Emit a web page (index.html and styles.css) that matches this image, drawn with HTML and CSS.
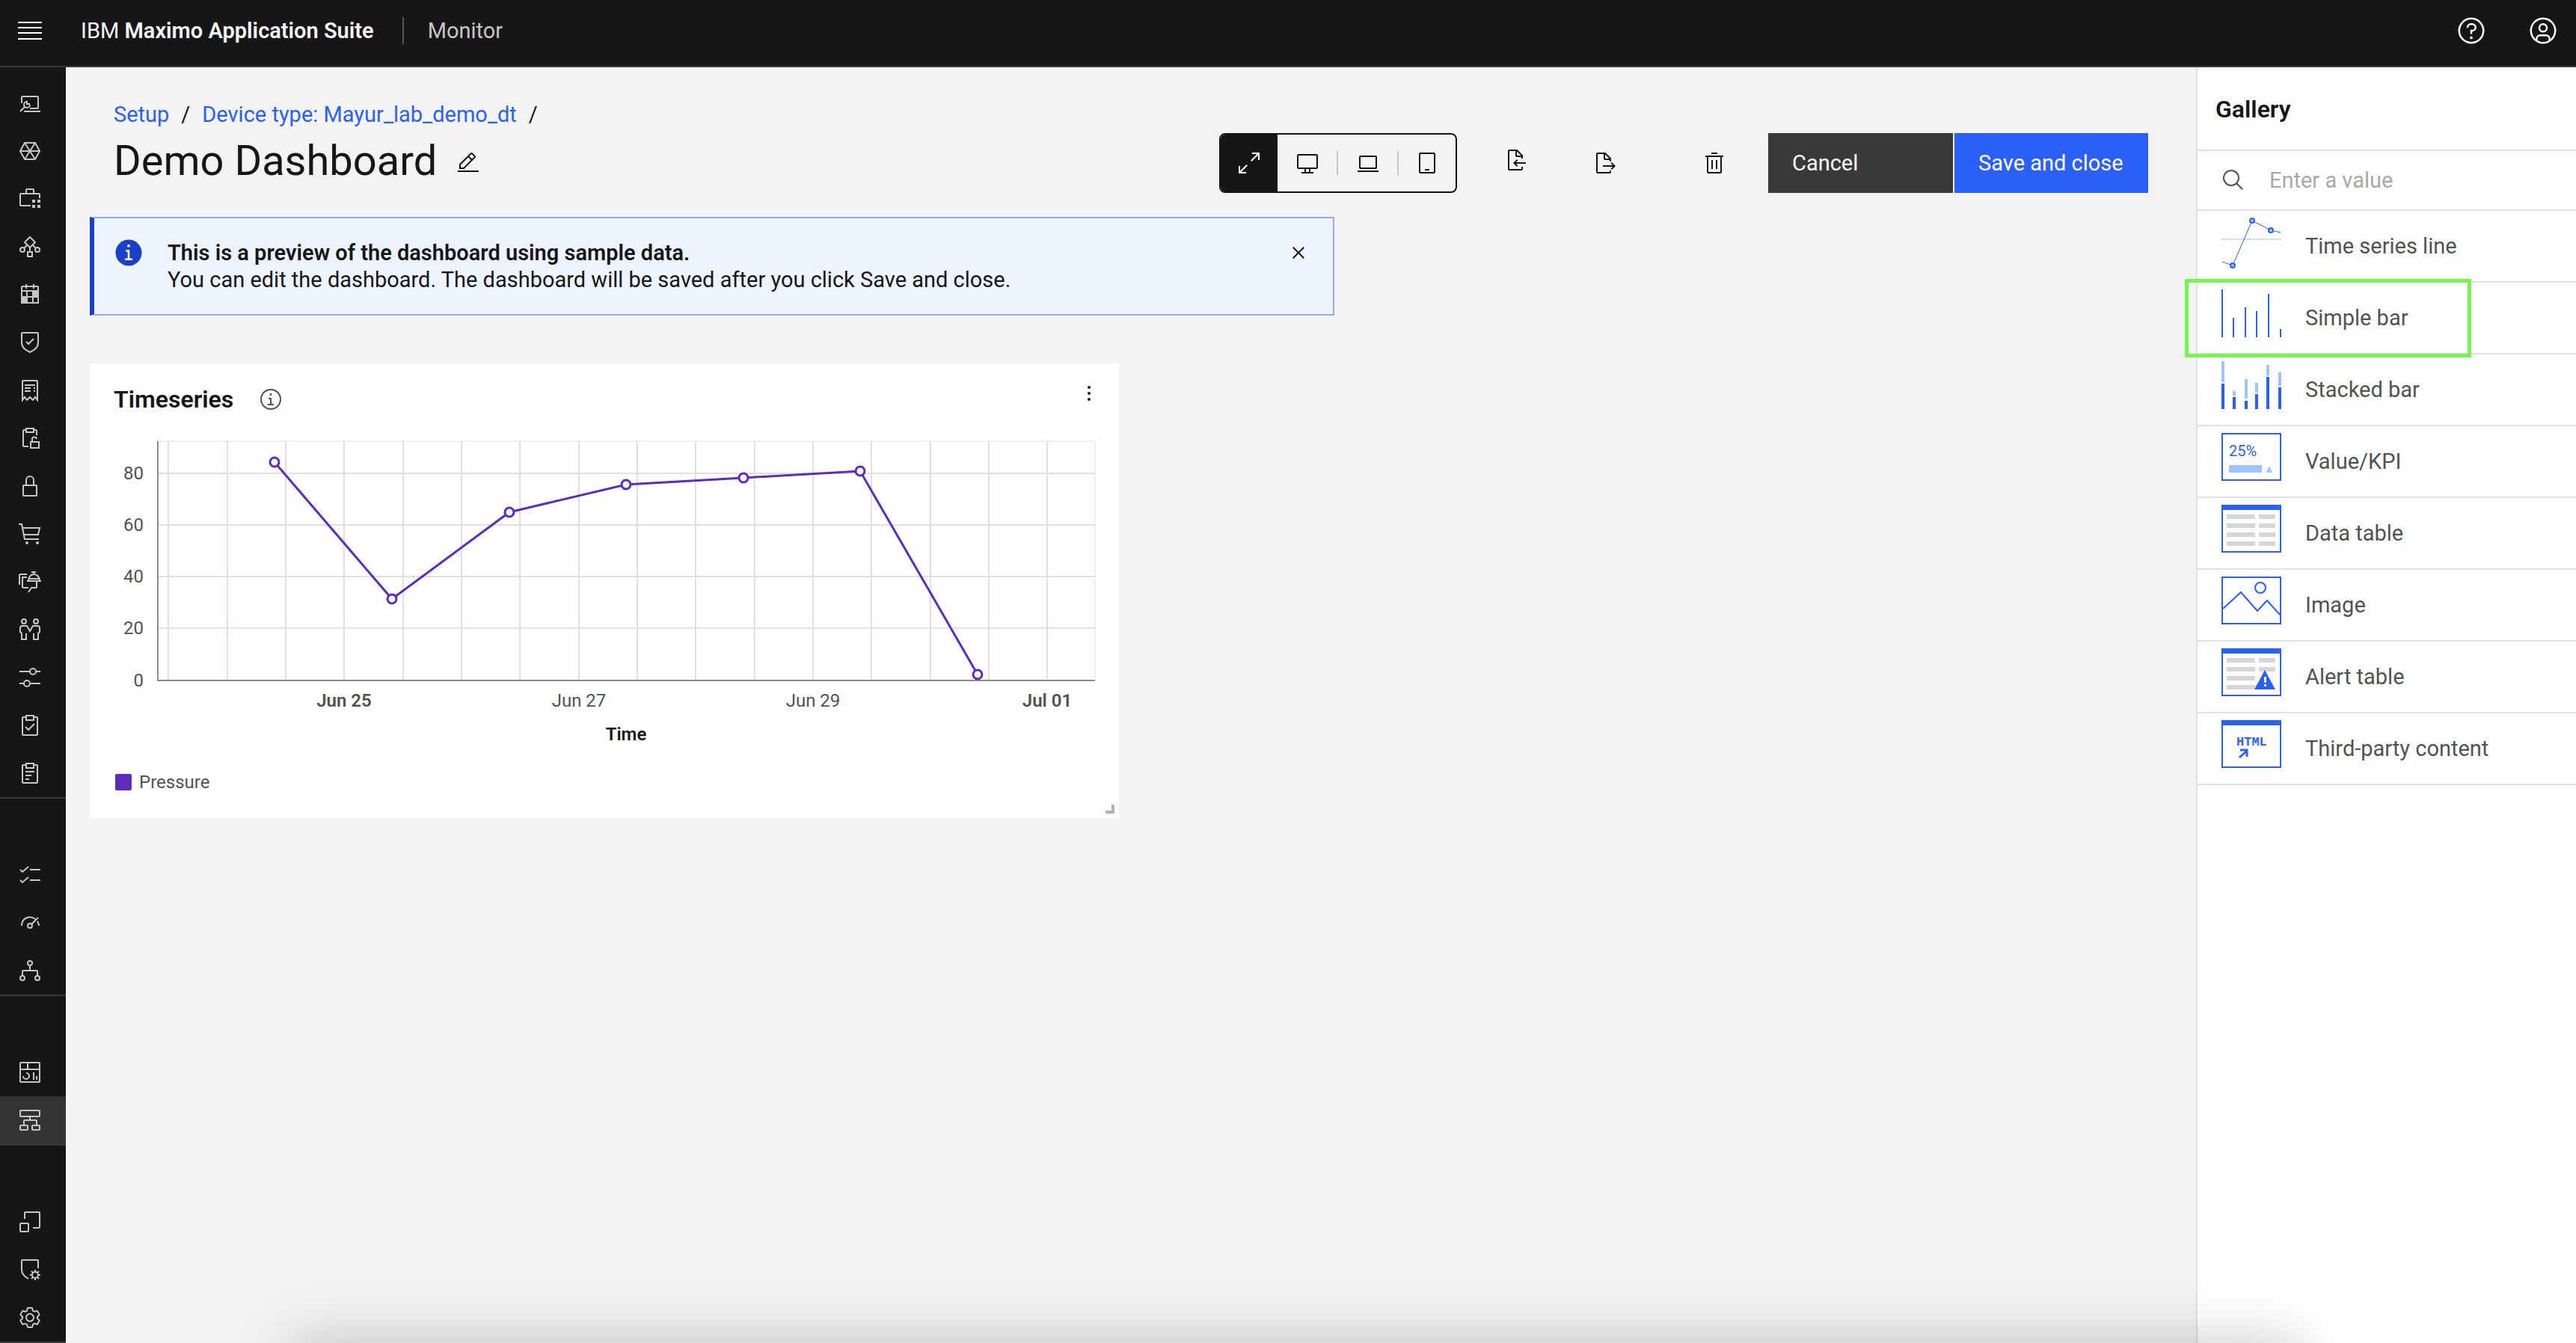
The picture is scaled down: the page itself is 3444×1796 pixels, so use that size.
FILE: index.html
```html
<!DOCTYPE html>
<html lang="en">
<head>
<meta charset="utf-8">
<meta name="viewport" content="width=device-width, initial-scale=1">
<title>Demo Dashboard - Monitor</title>
<link rel="stylesheet" href="styles.css">
</head>
<body>
<div class="shell">
  <header class="topbar">
    <button class="menu-button" type="button" aria-label="Open menu">
      <svg class="menu-icon" viewBox="0 0 32 24" aria-hidden="true"><path d="M0 1h32M0 8h32M0 15h32M0 23h32"/></svg>
    </button>
    <a class="brand" href="#">IBM <strong>Maximo Application Suite</strong></a>
    <span class="app-name">Monitor</span>
    <div class="topbar-actions">
      <button class="topbar-button" type="button" aria-label="Help">
        <svg class="icon-lg solid" viewBox="0 0 32 32" aria-hidden="true"><path d="M16 2a14 14 0 1 0 14 14A14 14 0 0 0 16 2Zm0 26a12 12 0 1 1 12-12 12 12 0 0 1-12 12Z"/><circle cx="16" cy="23.5" r="1.5"/><path d="M17 8h-1.500A4.490 4.490 0 0 0 11 12.500V13h2v-.5A2.500 2.500 0 0 1 15.500 10H17a2.500 2.500 0 0 1 0 5h-2v4.500h2V17a4.500 4.500 0 0 0 0-9Z"/></svg>
      </button>
      <button class="topbar-button" type="button" aria-label="Account">
        <svg class="icon-lg solid" viewBox="0 0 32 32" aria-hidden="true"><path d="M16 8a5 5 0 1 0 5 5 5 5 0 0 0-5-5Zm0 8a3 3 0 1 1 3-3 3 3 0 0 1-3 3Z"/><path d="M16 2a14 14 0 1 0 14 14A14.016 14.016 0 0 0 16 2Zm-6 24.377V25a3.003 3.003 0 0 1 3-3h6a3.003 3.003 0 0 1 3 3v1.377a11.899 11.899 0 0 1-12 0Zm13.993-1.451A5.002 5.002 0 0 0 19 20h-6a5.002 5.002 0 0 0-4.993 4.926 12 12 0 1 1 15.985 0Z"/></svg>
      </button>
    </div>
  </header>

  <nav class="rail" aria-label="Applications">
    <ul class="rail-group rail-group-first">
      <li><a href="#" aria-label="Work centre"><svg class="icon line" viewBox="0 0 32 32"><path d="M5 16V8a1 1 0 0 1 1-1h20a1 1 0 0 1 1 1v14a1 1 0 0 1-1 1H16M8 27h22M3 27l6-6M12 14a4 4 0 1 0 4 4M12 13v4h4"/></svg></a></li>
      <li><a href="#" aria-label="Assets"><svg class="icon line" viewBox="0 0 32 32"><path d="M3 16 9 5h14l6 11-6 11H9zM3 16h26M9 5l14 22M23 5 9 27"/></svg></a></li>
      <li><a href="#" aria-label="Inventory"><svg class="icon line" viewBox="0 0 32 32"><path d="M17 25H4a1 1 0 0 1-1-1V10a1 1 0 0 1 1-1h24a1 1 0 0 1 1 1v5M11 9V4a1 1 0 0 1 1-1h8a1 1 0 0 1 1 1v5"/><path class="dot" d="M19 17h4v4h-4zM26 17h4v4h-4zM19 24h4v4h-4zM26 24h4v4h-4z"/></svg></a></li>
      <li><a href="#" aria-label="Planning"><svg class="icon line" viewBox="0 0 32 32"><path d="M16 3l7 7-7 7-7-7zM12 14l-4 4M20 14l4 4M16 17v6M13 23h6v6h-6z"/><circle cx="6" cy="20" r="3"/><circle cx="26" cy="20" r="3"/></svg></a></li>
      <li><a href="#" aria-label="Scheduling"><svg class="icon line" viewBox="0 0 32 32"><rect x="5" y="5" width="22" height="22" rx="1"/><path d="M11 2v6M21 2v6"/><path class="dot" fill-rule="evenodd" d="M4 10h24v18H4zM6 12v6h5v-6zM13 12v6h6v-6zM13 20v6h6v-6zM21 20v6h5v-6z"/></svg></a></li>
      <li><a href="#" aria-label="Safety"><svg class="icon line" viewBox="0 0 32 32"><path d="M5 4a1 1 0 0 1 1-1h20a1 1 0 0 1 1 1v12c0 7-5 10-11 13C10 26 5 23 5 16zM11 15l3 3 7-7"/></svg></a></li>
      <li><a href="#" aria-label="Invoices"><svg class="icon line" viewBox="0 0 32 32"><path d="M6 29V4a1 1 0 0 1 1-1h18a1 1 0 0 1 1 1v25l-3-4-3 4-4-4-4 4-3-4zM9 9h14M9 13h8M9 17h8M21 13h2M21 17h2"/></svg></a></li>
      <li><a href="#" aria-label="Open contracts"><svg class="icon line" viewBox="0 0 32 32"><path d="M14 27H8a1 1 0 0 1-1-1V6a1 1 0 0 1 1-1h3M21 5h3a1 1 0 0 1 1 1v6M11 3h10v5H11zM17 21h11v8H17zM19 21v-3a3 3 0 0 1 6-1"/></svg></a></li>
      <li><a href="#" aria-label="Permits"><svg class="icon line" viewBox="0 0 32 32"><rect x="7" y="15" width="18" height="14" rx="1"/><path d="M11 15V8a5 5 0 0 1 10 0v7"/></svg></a></li>
      <li><a href="#" aria-label="Purchasing"><svg class="icon line" viewBox="0 0 32 32"><path d="M1 3h4l4 20h19M6 8h23l-2 9H8"/><circle class="dot" cx="12" cy="28" r="2"/><circle class="dot" cx="26" cy="28" r="2"/></svg></a></li>
      <li><a href="#" aria-label="Service desk"><svg class="icon line" viewBox="0 0 32 32"><path d="M2 20V7a1 1 0 0 1 1-1h9M12 10H6v13a1 1 0 0 0 1 1h7M14 30l4-6h6a1 1 0 0 0 1-1v-7M12 15h19M14 12h15M14 15c0-12 15-12 15 0M18 3h6M21 3v3"/></svg></a></li>
      <li><a href="#" aria-label="Service level"><svg class="icon line" viewBox="0 0 32 32"><circle cx="8" cy="5" r="3"/><circle cx="24" cy="5" r="3"/><path d="M11 21v8H5v-8l-2-2v-5a3 3 0 0 1 3-3h6l4 7 4-7h6a3 3 0 0 1 3 3v5l-2 2v8h-6v-8"/></svg></a></li>
      <li><a href="#" aria-label="Adjustments"><svg class="icon line" viewBox="0 0 32 32"><path d="M2 8h14M24 8h6M2 24h6M16 24h14"/><circle cx="20" cy="8" r="4"/><circle cx="12" cy="24" r="4"/></svg></a></li>
      <li><a href="#" aria-label="Work orders"><svg class="icon line" viewBox="0 0 32 32"><path d="M11 5H7a1 1 0 0 0-1 1v22a1 1 0 0 0 1 1h18a1 1 0 0 0 1-1V6a1 1 0 0 0-1-1h-4M11 3h10v6H11zM10 18l4 4 8-8"/></svg></a></li>
      <li><a href="#" aria-label="Reports"><svg class="icon line" viewBox="0 0 32 32"><path d="M11 5H7a1 1 0 0 0-1 1v22a1 1 0 0 0 1 1h18a1 1 0 0 0 1-1V6a1 1 0 0 0-1-1h-4M11 3h10v6H11zM10 14h12M10 19h8M10 24h5"/></svg></a></li>
    </ul>
    <ul class="rail-group">
      <li><a href="#" aria-label="Tasks"><svg class="icon line" viewBox="0 0 32 32"><path d="M3 9l3 3 8-7M16 9h14M3 23l3 3 8-7M16 23h14"/></svg></a></li>
      <li><a href="#" aria-label="Health"><svg class="icon line" viewBox="0 0 32 32"><circle cx="16" cy="20" r="3"/><path d="M18 18l9-9M5 20c0-11 11-14 18-9M26 14c1 2 2 4 2 6"/></svg></a></li>
      <li><a href="#" aria-label="Hierarchy"><svg class="icon line" viewBox="0 0 32 32"><circle cx="16" cy="6" r="3"/><circle cx="6" cy="26" r="3"/><circle cx="26" cy="26" r="3"/><path d="M16 9v7M6 23v-6a1 1 0 0 1 1-1h18a1 1 0 0 1 1 1v6"/></svg></a></li>
    </ul>
    <ul class="rail-group">
      <li><a href="#" aria-label="Dashboards"><svg class="icon line" viewBox="0 0 32 32"><rect x="3" y="3" width="26" height="26" rx="1"/><path d="M3 12h26M13 3v9M11 17a4 4 0 1 1-4 4M21 16v10M25 21v5"/></svg></a></li>
      <li><a class="current" href="#" aria-label="Setup" aria-current="page"><svg class="icon line" viewBox="0 0 32 32"><rect x="3" y="3" width="26" height="8" rx="1"/><rect x="3" y="23" width="10" height="6" rx="1"/><rect x="19" y="23" width="10" height="6" rx="1"/><path d="M16 11v5M8 23v-6a1 1 0 0 1 1-1h15a1 1 0 0 1 1 1v6"/></svg></a></li>
    </ul>
    <ul class="rail-group">
      <li><a href="#" aria-label="Edge"><svg class="icon line" viewBox="0 0 32 32"><path d="M9 12V4a1 1 0 0 1 1-1h18a1 1 0 0 1 1 1v19a1 1 0 0 1-1 1h-8"/><rect x="3" y="18" width="11" height="11" rx="1"/></svg></a></li>
      <li><a href="#" aria-label="Security"><svg class="icon line" viewBox="0 0 32 32"><path d="M14 28c-6-3-9-6-9-12V4a1 1 0 0 1 1-1h20a1 1 0 0 1 1 1v10"/><circle cx="23" cy="23" r="4"/><path d="M23 16v3M23 27v3M16 23h3M27 23h3M18 18l2 2M26 26l2 2M28 18l-2 2M20 26l-2 2"/></svg></a></li>
      <li><a href="#" aria-label="Settings"><svg class="icon" viewBox="0 0 32 32"><path d="M27,16.76c0-.25,0-.5,0-.76s0-.51,0-.77l1.92-1.68A2,2,0,0,0,29.3,11L26.94,7a2,2,0,0,0-1.73-1,2,2,0,0,0-.64.1l-2.43.82a11.35,11.35,0,0,0-1.31-.75l-.51-2.52a2,2,0,0,0-2-1.61H13.64a2,2,0,0,0-2,1.61l-.51,2.52a11.48,11.48,0,0,0-1.32.75L7.43,6.06A2,2,0,0,0,6.79,6,2,2,0,0,0,5.06,7L2.7,11a2,2,0,0,0,.41,2.51L5,15.24c0,.25,0,.5,0,.76s0,.51,0,.77L3.11,18.45A2,2,0,0,0,2.7,21L5.06,25a2,2,0,0,0,1.73,1,2,2,0,0,0,.64-.1l2.43-.82a11.35,11.35,0,0,0,1.31.75l.51,2.52a2,2,0,0,0,2,1.61h4.72a2,2,0,0,0,2-1.61l.51-2.52a11.48,11.48,0,0,0,1.32-.75l2.42.82a2,2,0,0,0,.64.1,2,2,0,0,0,1.73-1L29.3,21a2,2,0,0,0-.41-2.51ZM25.21,24l-3.43-1.16a8.86,8.86,0,0,1-2.71,1.57L18.36,28H13.64l-.71-3.55a9.36,9.36,0,0,1-2.7-1.57L6.79,24,4.43,20l2.72-2.4a8.9,8.9,0,0,1,0-3.13L4.43,12,6.79,8l3.43,1.16a8.86,8.86,0,0,1,2.71-1.57L13.64,4h4.72l.71,3.55a9.36,9.36,0,0,1,2.7,1.57L25.21,8,27.57,12l-2.72,2.4a8.9,8.9,0,0,1,0,3.13L27.57,20Z"/><path d="M16,22a6,6,0,1,1,6-6A5.94,5.94,0,0,1,16,22Zm0-10a3.91,3.91,0,0,0-4,4,3.91,3.91,0,0,0,4,4,3.91,3.91,0,0,0,4-4A3.91,3.91,0,0,0,16,12Z"/></svg></a></li>
    </ul>
  </nav>

  <main class="content">
    <div class="page-head">
      <div class="page-title">
        <nav class="breadcrumb" aria-label="Breadcrumb">
          <a href="#">Setup</a><span>/</span><a href="#">Device type: Mayur_lab_demo_dt</a><span>/</span>
        </nav>
        <div class="title-row">
          <h1>Demo Dashboard</h1>
          <button class="edit-button" type="button" aria-label="Edit title">
            <svg class="icon" viewBox="0 0 32 32" aria-hidden="true"><path d="M2 26h28v2H2zM25.400 9c.8-.8.8-2 0-2.800l-3.600-3.600c-.8-.8-2-.8-2.800 0l-15 15V24h6.400l15-15zm-5-5L24 7.600l-3 3L17.400 7l3-3zM6 22v-3.600l10-10 3.600 3.600-10 10H6z"/></svg>
          </button>
        </div>
      </div>
      <div class="page-actions">
        <div class="size-switch" role="group" aria-label="Preview size">
          <button class="size-option outer selected" type="button" aria-pressed="true" aria-label="Fit to screen">
            <svg class="icon" viewBox="0 0 32 32" aria-hidden="true"><path d="M20 2v2h6.586L18 12.582 19.414 14 28 5.414V12h2V2zM14 19.416 12.592 18 4 26.586V20H2v10h10v-2H5.414z"/></svg>
          </button>
          <button class="size-option" type="button" aria-pressed="false" aria-label="Large screen">
            <svg class="icon" viewBox="0 0 32 32" aria-hidden="true"><path d="M28 4H4a2 2 0 0 0-2 2v16a2 2 0 0 0 2 2h8v4H8v2h16v-2h-4v-4h8a2 2 0 0 0 2-2V6a2 2 0 0 0-2-2ZM18 28h-4v-4h4Zm10-6H4V6h24Z"/></svg>
          </button>
          <span class="size-rule"></span>
          <button class="size-option" type="button" aria-pressed="false" aria-label="Laptop">
            <svg class="icon" viewBox="0 0 32 32" aria-hidden="true"><path d="M26 24H6a2 2 0 0 1-2-2V8a2 2 0 0 1 2-2h20a2 2 0 0 1 2 2v14a2 2 0 0 1-2 2ZM6 8v14h20V8ZM2 26h28v2H2z"/></svg>
          </button>
          <span class="size-rule"></span>
          <button class="size-option outer" type="button" aria-pressed="false" aria-label="Tablet">
            <svg class="icon" viewBox="0 0 32 32" aria-hidden="true"><path d="M19 24v2h-6v-2ZM25 30H7a2 2 0 0 1-2-2V4a2 2 0 0 1 2-2h18a2 2 0 0 1 2 2v24a2 2 0 0 1-2 2ZM7 4v24h18V4Z"/></svg>
          </button>
        </div>
        <div class="file-actions">
          <button class="tool-button upload" type="button" aria-label="Import">
            <svg class="icon" viewBox="0 0 32 32" aria-hidden="true"><path d="M28 19H14.830l2.580-2.590L16 15l-5 5 5 5 1.410-1.410L14.830 21H28ZM24 14v-4a1 1 0 0 0-.29-.71l-7-7A1 1 0 0 0 16 2H6a2 2 0 0 0-2 2v24a2 2 0 0 0 2 2h16a2 2 0 0 0 2-2v-3h-2v3H6V4h8v6a2 2 0 0 0 2 2h6v2Zm-8-4V4.410L21.590 10Z"/></svg>
          </button>
          <button class="tool-button" type="button" aria-label="Export">
            <svg class="icon" viewBox="0 0 32 32" aria-hidden="true"><path d="M13 21h13.170l-2.580 2.590L25 25l5-5-5-5-1.410 1.410L26.170 19H13ZM24 14v-4a1 1 0 0 0-.29-.71l-7-7A1 1 0 0 0 16 2H6a2 2 0 0 0-2 2v24a2 2 0 0 0 2 2h16a2 2 0 0 0 2-2v-2h-2v2H6V4h8v6a2 2 0 0 0 2 2h6v2Zm-8-4V4.410L21.590 10Z"/></svg>
          </button>
        </div>
        <button class="tool-button delete" type="button" aria-label="Delete">
          <svg class="icon" viewBox="0 0 32 32" aria-hidden="true"><path d="M12 12h2v12h-2zM18 12h2v12h-2zM4 6v2h2v20a2 2 0 0 0 2 2h16a2 2 0 0 0 2-2V8h2V6ZM8 28V8h16v20ZM12 2h8v2h-8z"/></svg>
        </button>
        <div class="commit-actions">
          <button class="button secondary" type="button">Cancel</button>
          <button class="button primary" type="button">Save and close</button>
        </div>
      </div>
    </div>

    <section class="notice" role="status">
      <svg class="icon-lg notice-icon" viewBox="0 0 32 32" aria-hidden="true"><circle class="notice-disc" cx="16" cy="16" r="14"/><path class="notice-mark" d="M17 22v-9h-4v2h2v7h-3v2h8v-2zM16 7a1.500 1.500 0 1 0 0 3 1.500 1.500 0 0 0 0-3z"/></svg>
      <div class="notice-text">
        <h2>This is a preview of the dashboard using sample data.</h2>
        <p>You can edit the dashboard. The dashboard will be saved after you click Save and close.</p>
      </div>
      <button class="notice-close" type="button" aria-label="Close notification">
        <svg class="icon" viewBox="0 0 32 32" aria-hidden="true"><path d="M24 9.400 22.600 8 16 14.600 9.400 8 8 9.400l6.600 6.600L8 22.600 9.400 24l6.600-6.600 6.600 6.600 1.400-1.400-6.600-6.600L24 9.400z"/></svg>
      </button>
    </section>

    <article class="card">
      <header class="card-head">
        <h2>Timeseries</h2>
        <button class="info-button" type="button" aria-label="About this card">
          <svg class="icon" viewBox="0 0 32 32" aria-hidden="true"><path d="M17 22v-8h-4v2h2v6h-3v2h8v-2zM16 8a1.500 1.500 0 1 0 1.500 1.500A1.500 1.500 0 0 0 16 8zM16 30a14 14 0 1 1 14-14 14 14 0 0 1-14 14Zm0-26a12 12 0 1 0 12 12A12 12 0 0 0 16 4Z"/></svg>
        </button>
        <button class="card-menu" type="button" aria-label="Card options">
          <svg class="icon" viewBox="0 0 32 32" aria-hidden="true"><circle cx="16" cy="8" r="2"/><circle cx="16" cy="16" r="2"/><circle cx="16" cy="24" r="2"/></svg>
        </button>
      </header>
      <svg class="chart" viewBox="0 0 1376 446" role="img" aria-label="Pressure over time">
        <path class="grid" d="M105 8v320M184 8v320M262 8v320M340 8v320M419 8v320M497 8v320M575 8v320M654 8v320M732 8v320M810 8v320M889 8v320M967 8v320M1045 8v320M1124 8v320M1202 8v320M1280 8v320M91 51h1253M91 120h1253M91 189h1253M91 258h1253"/>
        <path class="frame" d="M91 8h1253v320"/>
        <path class="axis" d="M91 8v320h1253"/>
        <g class="tick tick-y">
          <text x="72" y="59">80</text><text x="72" y="128">60</text><text x="72" y="197">40</text><text x="72" y="266">20</text><text x="72" y="336">0</text>
        </g>
        <g class="tick">
          <text class="strong" x="340" y="363">Jun 25</text><text x="654" y="363">Jun 27</text><text x="967" y="363">Jun 29</text><text class="strong" x="1280" y="363">Jul 01</text>
        </g>
        <text class="axis-title" x="717" y="408">Time</text>
        <path class="series" d="M247 36 404 219 561 103 717 66 874 57 1030 48 1187 320"/>
        <g class="points"><circle cx="247" cy="36" r="6"/><circle cx="404" cy="219" r="6"/><circle cx="561" cy="103" r="6"/><circle cx="717" cy="66" r="6"/><circle cx="874" cy="57" r="6"/><circle cx="1030" cy="48" r="6"/><circle cx="1187" cy="320" r="6"/></g>
      </svg>
      <p class="legend"><span class="swatch"></span>Pressure</p>
      <span class="resize-handle"></span>
    </article>
  </main>

  <aside class="gallery" aria-labelledby="gallery-title">
    <h2 id="gallery-title">Gallery</h2>
    <label class="search">
      <svg class="icon" viewBox="0 0 32 32" aria-hidden="true"><path d="m29 27.586-7.552-7.552a11.018 11.018 0 1 0-1.414 1.414L27.586 29ZM4 13a9 9 0 1 1 9 9 9.010 9.010 0 0 1-9-9Z"/></svg>
      <input type="search" placeholder="Enter a value" aria-label="Search the gallery">
    </label>
    <ul class="gallery-list">
      <li><button type="button">
        <svg class="thumb" viewBox="0 0 80 64" aria-hidden="true"><path class="dotted" d="M0 29h79"/><path class="thin" d="M1 59l14 5L41 4l25 13 13 3"/><g class="knot"><circle cx="15" cy="64" r="3"/><circle cx="41" cy="4" r="3"/><circle cx="66" cy="17" r="3"/></g></svg>
        Time series line</button></li>
      <li class="highlighted"><button type="button">
        <svg class="thumb" viewBox="0 0 80 64" aria-hidden="true"><path class="fill" d="M0 0h2v64H0zM15 38h2v26h-2zM31 24h2v40h-2zM46 29h2v35h-2zM62 6h2v58h-2zM78 53h2v11h-2z"/></svg>
        Simple bar</button></li>
      <li><button type="button">
        <svg class="thumb" viewBox="0 0 80 64" aria-hidden="true"><path class="pale" d="M0 0h4v28H0zM15 40h4v6h-4zM31 24h4v26h-4zM45 29h4v13h-4zM60 5h4v14h-4zM76 15h4v18h-4z"/><path class="fill" d="M0 30h4v34H0zM15 48h4v16h-4zM31 53h4v11h-4zM45 44h4v20h-4zM60 21h4v43h-4zM76 35h4v29h-4z"/></svg>
        Stacked bar</button></li>
      <li><button type="button">
        <svg class="thumb" viewBox="0 0 80 64" aria-hidden="true"><rect class="outline" x="1" y="1" width="78" height="62"/><text class="kpi" x="10" y="31">25%</text><path class="pale" d="M10 43h44v10H10zM60 53l4-9 4 9z"/></svg>
        Value/KPI</button></li>
      <li><button type="button">
        <svg class="thumb" viewBox="0 0 80 64" aria-hidden="true"><rect class="outline" x="1" y="1" width="78" height="62"/><path class="fill" d="M0 0h80v7H0z"/><path class="rows" d="M7 13h38v6H7zM50 13h22v6H50zM7 25h38v6H7zM50 25h22v6H50zM7 37h38v6H7zM50 37h22v6H50zM7 49h38v6H7zM50 49h22v6H50z"/></svg>
        Data table</button></li>
      <li><button type="button">
        <svg class="thumb" viewBox="0 0 80 64" aria-hidden="true"><rect class="outline" x="1" y="1" width="78" height="62"/><path class="outline" d="M2 43l24-22 22 25 13-14 17 19"/><circle class="outline" cx="52" cy="15" r="7"/></svg>
        Image</button></li>
      <li><button type="button">
        <svg class="thumb" viewBox="0 0 80 64" aria-hidden="true"><rect class="outline" x="1" y="1" width="78" height="62"/><path class="fill" d="M0 0h80v7H0z"/><path class="rows" d="M7 13h38v6H7zM50 13h22v6H50zM7 25h38v6H7zM50 25h22v6H50zM7 37h38v6H7zM7 49h38v6H7z"/><path class="fill" d="M58 29 72 55H44z"/><path class="mark" d="M57 38h3v8h-3zM57 48h3v3h-3z"/></svg>
        Alert table</button></li>
      <li><button type="button">
        <svg class="thumb" viewBox="0 0 80 64" aria-hidden="true"><rect class="outline" x="1" y="1" width="78" height="62"/><path class="fill" d="M0 0h80v7H0z"/><text class="code" x="20" y="34">HTML</text><path class="arrow" d="M24 50l10-9M25 40h9v9"/></svg>
        Third-party content</button></li>
    </ul>
  </aside>
</div>
<div class="edge-shadow"></div>
</body>
</html>
```

FILE: styles.css
```css
:root {
  --ink: #161616;
  --ink-soft: #525252;
  --line: #e0e0e0;
  --blue: #2b60f6;
  --purple: #5e2bbd;
}

*,
*::before,
*::after {
  box-sizing: border-box;
}

body {
  margin: 0;
  background: #f3f3f3;
  color: var(--ink);
  font-family: Roboto, "Liberation Sans", sans-serif;
  font-size: 29px;
  line-height: 36px;
}

h1,
h2,
p,
ul {
  margin: 0;
  padding: 0;
}

ul {
  list-style: none;
}

a {
  color: inherit;
  text-decoration: none;
}

button {
  margin: 0;
  padding: 0;
  border: 0;
  background: none;
  color: inherit;
  font: inherit;
  text-align: left;
  cursor: pointer;
}

svg {
  display: block;
  flex: none;
}

.icon {
  width: 32px;
  height: 32px;
  fill: currentColor;
}

.icon-lg {
  width: 40px;
  height: 40px;
}

.solid {
  fill: currentColor;
}

.line {
  fill: none;
  stroke: currentColor;
  stroke-width: 2;
}

.line .dot {
  fill: currentColor;
  stroke: none;
}

/* Page frame */

.shell {
  display: grid;
  grid-template-columns: 88px 1fr 508px;
  grid-template-rows: 90px 1fr;
  min-height: 100vh;
}

/* Top bar */

.topbar {
  grid-column: 1 / -1;
  display: flex;
  align-items: center;
  padding-bottom: 6px;
  border-bottom: 2px solid #393939;
  background: var(--ink);
  color: #f4f4f4;
}

.menu-button {
  width: 80px;
  padding-left: 24px;
}

.menu-icon {
  width: 32px;
  height: 24px;
  stroke: #fff;
  stroke-width: 2;
}

.brand {
  margin-left: 28px;
  padding-right: 38px;
  border-right: 2px solid #525252;
}

.brand strong {
  font-weight: 600;
}

.app-name {
  padding-left: 32px;
  color: #c6c6c6;
}

.topbar-actions {
  display: flex;
  gap: 8px;
  margin-left: auto;
}

.topbar-button {
  display: grid;
  place-items: center;
  width: 88px;
  height: 80px;
  color: #fff;
}

/* Side rail */

.rail {
  background: var(--ink);
  color: #c6c6c6;
}

.rail-group {
  padding-top: 70px;
  border-bottom: 2px solid #393939;
}

.rail-group-first {
  padding-top: 16px;
}

.rail-group a {
  display: flex;
  align-items: center;
  height: 64px;
  padding-left: 24px;
}

.rail-group .current {
  background: #333;
}

/* Main content */

.content {
  padding: 45px 64px 64px 32px;
}

.page-head {
  display: flex;
  align-items: flex-end;
  justify-content: space-between;
}

.page-title {
  padding: 0 0 11px 32px;
}

.breadcrumb {
  display: flex;
  gap: 16px;
}

.breadcrumb a {
  color: var(--blue);
}

.title-row {
  display: flex;
  align-items: center;
  gap: 26px;
  margin-top: 12px;
}

.title-row h1 {
  font-size: 56px;
  font-weight: 400;
  line-height: 64px;
}

.edit-button {
  padding-top: 6px;
}

.page-actions {
  display: flex;
}

.size-switch {
  display: flex;
  align-items: center;
  height: 80px;
  overflow: hidden;
  border: 2px solid var(--ink);
  border-radius: 8px;
}

.size-option {
  display: grid;
  place-items: center;
  width: 79px;
  height: 80px;
}

.size-option.outer {
  width: 76px;
}

.size-option.selected {
  background: var(--ink);
  color: #fff;
}

.size-rule {
  width: 2px;
  height: 32px;
  background: #c6c6c6;
}

.file-actions {
  display: flex;
  gap: 38px;
  margin-left: 40px;
}

.tool-button {
  display: grid;
  place-items: center;
  width: 80px;
  height: 80px;
}

.tool-button.upload {
  height: 72px;
}

.tool-button.delete {
  margin-left: 66px;
}

.commit-actions {
  display: flex;
  gap: 2px;
  margin-left: 32px;
}

.button {
  height: 80px;
  padding: 0 32px;
  color: #fff;
  white-space: nowrap;
}

.button.secondary {
  width: 247px;
  background: #393939;
}

.button.primary {
  width: 259px;
  background: var(--blue);
}

/* Notice */

.notice {
  display: flex;
  align-items: flex-start;
  max-width: 1664px;
  margin-top: 32px;
  padding: 26px 30px 28px 26px;
  border: 2px solid #97aeea;
  border-left: 6px solid #1841c8;
  background: #edf4ff;
}

.notice-disc {
  fill: #1841c8;
}

.notice-mark {
  fill: #fff;
}

.notice-text {
  flex: 1;
  padding: 2px 0 0 32px;
}

.notice-text h2 {
  font-size: 29px;
  font-weight: 600;
}

.notice-close {
  padding-top: 4px;
}

/* Card */

.card {
  position: relative;
  width: 50%;
  margin-top: 64px;
  padding-bottom: 30px;
  background: #fff;
}

.card-head {
  display: flex;
  align-items: center;
  height: 96px;
  padding-left: 32px;
}

.card-head h2 {
  font-size: 32px;
  font-weight: 600;
}

.info-button {
  margin-left: 34px;
  color: var(--ink-soft);
}

.card-menu {
  display: grid;
  place-items: center;
  align-self: flex-start;
  width: 80px;
  height: 80px;
  margin-left: auto;
}

.chart {
  width: 100%;
  height: auto;
  font-size: 24px;
}

.grid,
.frame,
.axis {
  fill: none;
  stroke: var(--line);
  stroke-width: 2;
}

.frame {
  stroke-width: 1;
}

.axis {
  stroke: #8d8d8d;
}

.tick {
  fill: var(--ink-soft);
  text-anchor: middle;
}

.tick-y {
  text-anchor: end;
}

.tick .strong,
.axis-title {
  font-weight: 600;
}

.axis-title {
  fill: var(--ink);
  text-anchor: middle;
}

.series {
  fill: none;
  stroke: var(--purple);
  stroke-width: 3;
}

.points {
  fill: #f3f3f3;
  stroke: var(--purple);
  stroke-width: 3;
}

.legend {
  display: flex;
  align-items: center;
  gap: 10px;
  padding-left: 34px;
  color: var(--ink-soft);
  font-size: 24px;
}

.swatch {
  width: 22px;
  height: 22px;
  border-radius: 2px;
  background: var(--purple);
}

.resize-handle {
  position: absolute;
  right: 6px;
  bottom: 6px;
  width: 12px;
  height: 12px;
  border: solid #b3b3b3;
  border-width: 0 4px 4px 0;
}

/* Gallery */

.gallery {
  border-left: 2px solid var(--line);
  background: #fff;
}

.gallery h2 {
  height: 112px;
  padding: 38px 24px 0;
  border-bottom: 2px solid var(--line);
  font-size: 32px;
  font-weight: 600;
}

.search {
  display: flex;
  align-items: center;
  gap: 32px;
  height: 80px;
  padding-left: 32px;
  border-bottom: 2px solid var(--line);
  color: var(--ink-soft);
}

.search input {
  flex: 1;
  min-width: 0;
  padding: 0;
  border: 0;
  outline: 0;
  background: none;
  color: var(--ink);
  font: inherit;
}

.search input::placeholder {
  color: #a8a8a8;
  opacity: 1;
}

.gallery-list li {
  position: relative;
  border-bottom: 2px solid var(--line);
}

.gallery-list button {
  display: flex;
  align-items: center;
  gap: 32px;
  width: 100%;
  height: 94px;
  padding-left: 32px;
  color: var(--ink-soft);
}

.gallery-list .highlighted::after {
  content: "";
  position: absolute;
  top: -5px;
  left: -17px;
  z-index: 1;
  width: 383px;
  height: 105px;
  border: 5px solid #74f64c;
  pointer-events: none;
}

.thumb {
  width: 80px;
  height: 64px;
  margin-bottom: 12px;
  overflow: visible;
}

.fill {
  fill: var(--blue);
}

.pale {
  fill: #a0c3ff;
}

.rows {
  fill: #d6d6d6;
}

.mark {
  fill: #fff;
}

.outline,
.thin,
.arrow {
  fill: none;
  stroke: var(--blue);
  stroke-width: 2;
}

.thin {
  stroke-width: 1;
}

.arrow {
  stroke-width: 3;
}

.dotted {
  stroke: #bcd0fa;
  stroke-width: 2;
  stroke-dasharray: 2 1;
}

.knot {
  fill: #a0c3ff;
  stroke: var(--blue);
  stroke-width: 2;
}

.kpi,
.code {
  fill: var(--blue);
  font-size: 20px;
}

.code {
  font-family: "Liberation Mono", monospace;
  font-size: 17px;
  font-weight: 700;
}

/* Soft shade along the lower window edge */

.edge-shadow {
  position: fixed;
  right: 369px;
  bottom: -100px;
  left: 390px;
  height: 100px;
  box-shadow: 0 0 80px rgba(0, 0, 0, 0.22);
  pointer-events: none;
}
```
